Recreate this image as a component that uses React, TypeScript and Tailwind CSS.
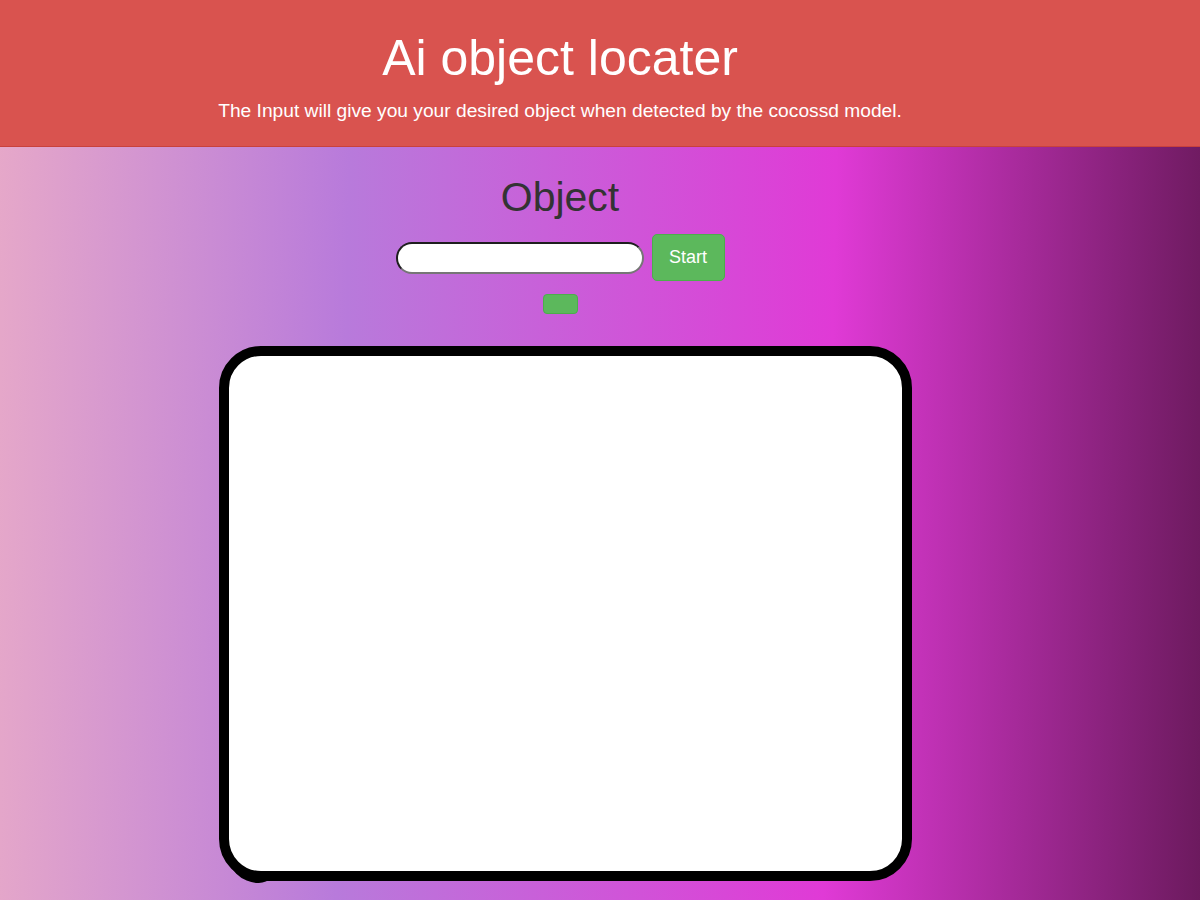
import React from "react";

export default function App() {
  return (
    <div
      className="min-h-[900px] w-[1200px] bg-[linear-gradient(91deg,#e6a8c9_0%,#b87adb_29%,#e03ad6_69%,#6c1a5e_100%)]"
      style={{ fontFamily: '"Liberation Sans", Arial, sans-serif' }}
    >
      <header className="h-[147px] w-full bg-[#d9534f] border-b border-[#c9413d]">
        <div className="w-[1120px] flex flex-col items-center pt-[33px]">
          <h1 className="text-[50px] leading-[50px] text-white font-normal">Ai object locater</h1>
          <p className="mt-[18px] text-[19.2px] leading-[20px] text-white">
            The Input will give you your desired object when detected by the cocossd model.
          </p>
        </div>
      </header>
      <main className="w-[1120px] flex flex-col items-center">
        <h2 className="mt-[30px] text-[41px] leading-[41px] text-[#333]">Object</h2>
        <div className="mt-[16px] flex items-center gap-[8px]">
          <input
            type="text"
            className="w-[248px] h-[32px] rounded-full bg-white border-2 border-t-[#1e1e1e] border-l-[#1e1e1e] border-b-[#767676] border-r-[#767676] outline-none px-3"
          />
          <button className="w-[73px] h-[47px] flex items-center justify-center rounded-[5px] bg-[#5cb85c] border border-[#4cae4c] text-white text-[18px]">
            Start
          </button>
        </div>
        <button className="mt-[13px] w-[35px] h-[20px] rounded-[4px] bg-[#5cb85c] border border-[#4cae4c]"></button>
        <div className="relative mt-[32px] ml-[11px] w-[693px] h-[535px]">
          <div className="absolute left-[8px] bottom-[-2px] w-[50px] h-[50px] rounded-bl-[42px] rounded-br-[24px] bg-black"></div>
          <div className="relative w-full h-full rounded-[42px] border-[10px] border-black bg-white"></div>
        </div>
      </main>
    </div>
  );
}
